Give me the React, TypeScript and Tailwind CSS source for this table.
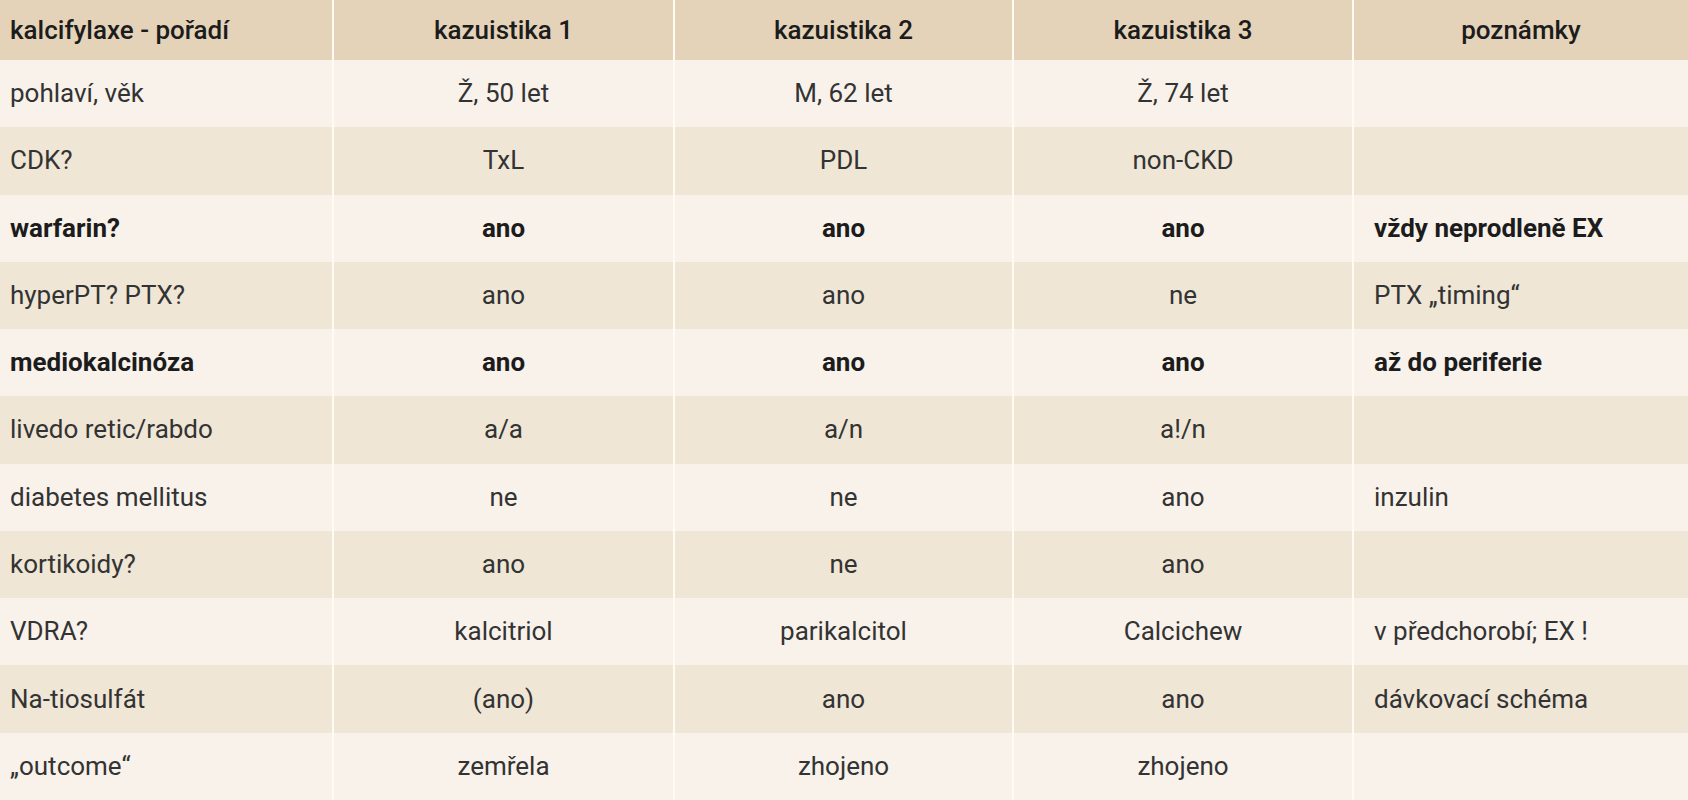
const headers = ['kalcifylaxe - pořadí', 'kazuistika 1', 'kazuistika 2', 'kazuistika 3', 'poznámky']

type Row = { cells: string[]; bold?: boolean }

const rows: Row[] = [
  { cells: ['pohlaví, věk', 'Ž, 50 let', 'M, 62 let', 'Ž, 74 let', ''] },
  { cells: ['CDK?', 'TxL', 'PDL', 'non-CKD', ''] },
  { cells: ['warfarin?', 'ano', 'ano', 'ano', 'vždy neprodleně EX'], bold: true },
  { cells: ['hyperPT? PTX?', 'ano', 'ano', 'ne', 'PTX „timing“'] },
  { cells: ['mediokalcinóza', 'ano', 'ano', 'ano', 'až do periferie'], bold: true },
  { cells: ['livedo retic/rabdo', 'a/a', 'a/n', 'a!/n', ''] },
  { cells: ['diabetes mellitus', 'ne', 'ne', 'ano', 'inzulin'] },
  { cells: ['kortikoidy?', 'ano', 'ne', 'ano', ''] },
  { cells: ['VDRA?', 'kalcitriol', 'parikalcitol', 'Calcichew', 'v předchorobí; EX !'] },
  { cells: ['Na-tiosulfát', '(ano)', 'ano', 'ano', 'dávkovací schéma'] },
  { cells: ['„outcome“', 'zemřela', 'zhojeno', 'zhojeno', ''] },
]

const cellPad = (i: number) =>
  i === 0 ? 'justify-start pl-[10px]' : i === 4 ? 'justify-start pl-5' : 'justify-center'

export default function App() {
  return (
    <div className="h-[800px] w-[1688px] overflow-hidden bg-[#f8f2eb] font-['Roboto',sans-serif]">
      <div className="grid h-full grid-cols-[334px_341px_339px_340px_1fr] grid-rows-[60px_repeat(11,1fr)]">
        {headers.map((h, i) => (
          <div
            key={h}
            className={`flex items-center bg-[#e4d3b8] text-[26px] font-medium text-[#1c1c1c] ${
              i === 0 ? 'justify-start pl-[10px]' : 'justify-center'
            } ${i < 4 ? 'border-r-2 border-[#fffaf2]' : ''}`}
          >
            {h}
          </div>
        ))}
        {rows.map((row, r) =>
          row.cells.map((c, i) => (
            <div
              key={`${r}-${i}`}
              className={`flex items-center text-[26px] ${cellPad(i)} ${
                r % 2 === 0 ? 'bg-[#f8f2eb]' : 'bg-[#efe6d6]'
              } ${row.bold ? 'font-bold text-[#1c1c1c]' : 'text-[#333333]'} ${
                i < 4 ? 'border-r-2 border-[#fffaf2]' : ''
              }`}
            >
              {c}
            </div>
          )),
        )}
      </div>
    </div>
  )
}
